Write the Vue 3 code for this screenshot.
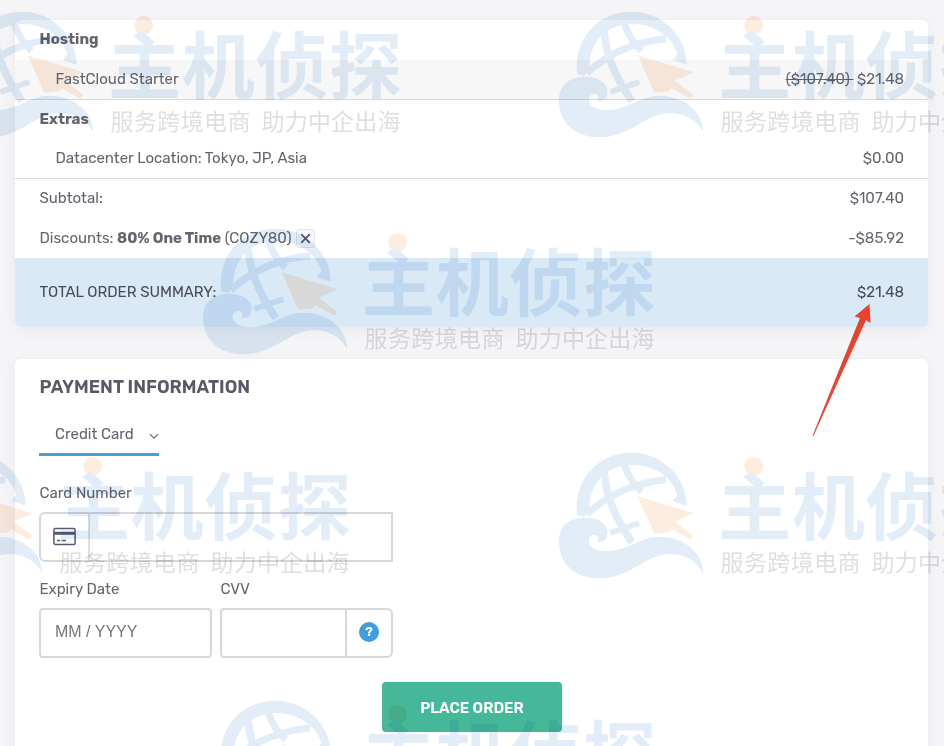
<!--
    checkout: order summary and payment
-->

<script setup>
    //------ imports ------
    import { ref } from 'vue';

    //------- data -------
    const cardNumber = ref('');
    const expiryDate = ref('');
    const cvv = ref('');
    const hasDiscount = ref(true);

    // watermark tiles
    const marks = [
        { x: -70, y: 0 },
        { x: 540, y: 0 },
        { x: 184, y: 217 },
        { x: -121, y: 441 },
        { x: 540, y: 441 },
        { x: 184, y: 689 },
    ];

    //------ methods ------
    const removeDiscount = () => {
        hasDiscount.value = false;
    };

    const placeOrder = () => {
        console.log('Order:', cardNumber.value, expiryDate.value, cvv.value);
    };
</script>


<template>
    <div class="page">
        <div class="card summary">
            <div class="row"><strong>Hosting</strong></div>
            <div class="row item shaded">
                <span>FastCloud Starter</span>
                <span class="amount"><s>($107.40)&nbsp;</s> $21.48</span>
            </div>
            <div class="row"><strong>Extras</strong></div>
            <div class="row item">
                <span>Datacenter Location: Tokyo, JP, Asia</span>
                <span class="amount">$0.00</span>
            </div>
            <div class="row">
                <span>Subtotal:</span>
                <span class="amount">$107.40</span>
            </div>
            <div class="row discount" v-if="hasDiscount">
                <div class="discount-text">
                    <span>Discounts: <strong>80% One Time</strong> (COZY80)</span>
                    <button class="remove" @click="removeDiscount">
                        <svg width="11" height="11" viewBox="0 0 11 11"><path d="M1.2 1.2l8.6 8.6M9.8 1.2l-8.6 8.6" stroke="#55576b" stroke-width="1.7" /></svg>
                    </button>
                </div>
                <span class="amount">-$85.92</span>
            </div>
            <div class="row total">
                <span>TOTAL ORDER SUMMARY:</span>
                <span class="amount">$21.48</span>
            </div>
        </div>

        <div class="card payment">
            <h2>PAYMENT INFORMATION</h2>
            <div class="method">
                <span>Credit Card</span>
                <svg width="10" height="7" viewBox="0 0 10 7"><path d="M1 1.2l4 4 4-4" fill="none" stroke="#686972" stroke-width="1.2" /></svg>
            </div>

            <div class="field">
                <label>Card Number</label>
                <div class="group card-group">
                    <span class="card-icon">
                        <svg width="23" height="19" viewBox="0 0 23 19">
                            <rect x=".9" y="1.5" width="21.2" height="16" rx="1.5" fill="none" stroke="#585a70" stroke-width="1.5" />
                            <path d="M1 6.3h21" stroke="#585a70" stroke-width="3" />
                            <path d="M4 13.500h3M8.500 13.500h4.500" stroke="#585a70" stroke-width="1.400" />
                        </svg>
                    </span>
                    <input v-model="cardNumber" type="text">
                </div>
            </div>

            <div class="field-row">
                <div class="field expiry">
                    <label>Expiry Date</label>
                    <div class="group">
                        <input v-model="expiryDate" type="text" placeholder="MM / YYYY">
                    </div>
                </div>
                <div class="field cvv">
                    <label>CVV</label>
                    <div class="group cvv-group">
                        <input v-model="cvv" type="text">
                        <span class="help"><b>?</b></span>
                    </div>
                </div>
            </div>

            <button class="place-btn" @click="placeOrder">PLACE ORDER</button>
        </div>

        <svg class="watermark" width="944" height="746" viewBox="0 0 944 746">
            <g v-for="mark in marks" :key="mark.x + '-' + mark.y" :transform="`translate(${mark.x} ${mark.y})`">
                <g transform="scale(.33333)">
                    <path d="M111 222C100 115 174 35 275 35C365 35 439 105 440 194L398 180L412 163C400 112 345 72 275 72C202 72 146 125 148 208L132 228Z" fill="#e2edf8" />
                    <g fill="none" stroke="#e2edf8">
                        <path d="M192 92Q200 195 276 304" stroke-width="23" />
                        <path d="M252 70Q272 125 305 152" stroke-width="21" />
                        <path d="M140 220Q235 130 378 116" stroke-width="21" />
                        <path d="M211 276L298 246" stroke-width="18" />
                    </g>
                    <path d="M57 300C57 250 92 230 140 230C184 231 210 258 202 283C198 300 186 307 172 301C184 285 163 275 150 287C137 303 155 328 190 330C250 333 285 300 330 290C405 275 487 318 490 397C466 353 425 337 385 340C315 343 270 410 185 412C100 413 57 366 57 300Z" fill="#e2edf8" />
                    <path d="M293 166L461 217L404 242L460 284L452 296L395 265L386 274L343 278Z" fill="#fdeddf" />
                    <circle cx="641" cy="76" r="28" fill="#fdeddf" />
                </g>
                <text class="brand" x="178" y="93" textLength="294">主机侦探</text>
                <text class="slogan" x="180.5" y="130" textLength="140">服务跨境电商</text>
                <text class="slogan" x="331.5" y="130" textLength="139">助力中企出海</text>
            </g>
        </svg>

        <svg class="pointer" width="62" height="134" viewBox="0 0 62 134">
            <path d="M57.5 0L42.5 12.500L48 14L.6 131.500L1.400 132L54 16L58.500 19Z" fill="#e8432c" />
        </svg>
    </div>
</template>

<style>
    body {
        margin: 0;
        overflow: hidden;
    }
</style>

<style scoped>
    .page {
        position: relative;
        box-sizing: border-box;
        height: 746px;
        padding: 20px 16px 0 15px;
        overflow: hidden;
        isolation: isolate;
        background: #f5f5f7;
        color: #63646e;
        font-family: Rubik, Roboto, "Liberation Sans", sans-serif;
        font-size: 15px;
    }
    .card {
        background: #fff;
        border-radius: 6px;
        box-shadow: 0 3px 14px rgba(80, 80, 110, 0.07);
    }
    .summary {
        height: 307px;
        margin-bottom: 32px;
        overflow: hidden;
    }
    .row {
        display: flex;
        align-items: center;
        justify-content: space-between;
        box-sizing: border-box;
        height: 40px;
        padding: 0 24px 2px 24.5px;
        white-space: nowrap;
    }
    .row.item {
        height: 39.5px;
        padding-left: 40.5px;
        border-bottom: 1px solid #d9dadd;
    }
    .row.shaded {
        padding-bottom: 0;
        background: #f7f7f7;
    }
    .row.discount {
        height: 39px;
        padding-bottom: 1px;
    }
    .row.total {
        height: 69px;
        background: #d9e9f6;
        color: #474b54;
    }
    .discount-text {
        display: flex;
        align-items: center;
        gap: 4px;
    }
    .remove {
        display: flex;
        align-items: center;
        justify-content: center;
        width: 19px;
        height: 19px;
        padding: 0;
        background: #f6f7fb;
        border: 1px solid #e2e4ee;
        border-radius: 3px;
    }
    .payment {
        box-sizing: border-box;
        height: 420px;
        padding: 17px 24px;
    }
    h2 {
        margin: 0 0 0 0.5px;
        font-size: 18px;
        line-height: 22px;
        font-weight: 600;
        color: #595a65;
    }
    .method {
        display: flex;
        align-items: center;
        justify-content: space-between;
        box-sizing: border-box;
        width: 120px;
        height: 43px;
        margin-top: 15px;
        padding: 2px 0 0 16px;
        border-bottom: 3px solid #4b9fd0;
    }
    .method svg {
        margin-top: 5px;
    }
    .field {
        display: flex;
        flex-direction: column;
    }
    .method + .field {
        width: 354px;
        margin-top: 26px;
    }
    label {
        height: 30px;
        padding-left: 0.5px;
        line-height: 22px;
    }
    .group {
        display: flex;
        box-sizing: border-box;
        height: 50px;
        border: 2px solid #d8d8da;
        border-radius: 4px;
    }
    .card-group {
        border-radius: 6px 0 0 6px;
    }
    .cvv-group {
        border-radius: 4px 6px 6px 4px;
    }
    .card-icon {
        display: flex;
        align-items: center;
        justify-content: center;
        width: 47px;
        border-right: 2px solid #e0e0e3;
    }
    .card-icon svg {
        margin-top: -1px;
    }
    input {
        flex: 1;
        min-width: 0;
        padding: 0 14px 2px;
        border: 0;
        outline: none;
        background: transparent;
        color: #63646e;
        font-family: "Liberation Sans", Arial, sans-serif;
        font-size: 16px;
    }
    input::placeholder {
        color: #77777b;
    }
    .field-row {
        display: flex;
        gap: 8px;
        margin-top: 16px;
    }
    .expiry, .cvv {
        width: 173px;
    }
    .help {
        display: flex;
        align-items: center;
        justify-content: center;
        width: 44px;
        border-left: 2px solid #d8d8da;
    }
    .help b {
        width: 20px;
        height: 20px;
        margin-top: -3px;
        border-radius: 50%;
        background: #429de0;
        color: #fff;
        font-size: 13px;
        font-weight: 600;
        line-height: 20px;
        text-align: center;
    }
    .place-btn {
        display: block;
        width: 180px;
        height: 50px;
        margin: 24px 0 0 343px;
        padding: 2px 0 0;
        border: 0;
        border-radius: 4px;
        background: #44b899;
        color: #fff;
        font-family: inherit;
        font-size: 15px;
        font-weight: 600;
    }
    .watermark {
        position: absolute;
        top: 0;
        left: 0;
        mix-blend-mode: multiply;
        pointer-events: none;
    }
    .brand {
        fill: #e2edf8;
        font: 700 73px "Noto Sans CJK SC", sans-serif;
    }
    .slogan {
        fill: #dfdfe1;
        font: 23px "Noto Sans CJK SC", sans-serif;
    }
    .pointer {
        position: absolute;
        top: 304px;
        left: 812px;
        pointer-events: none;
    }
</style>
